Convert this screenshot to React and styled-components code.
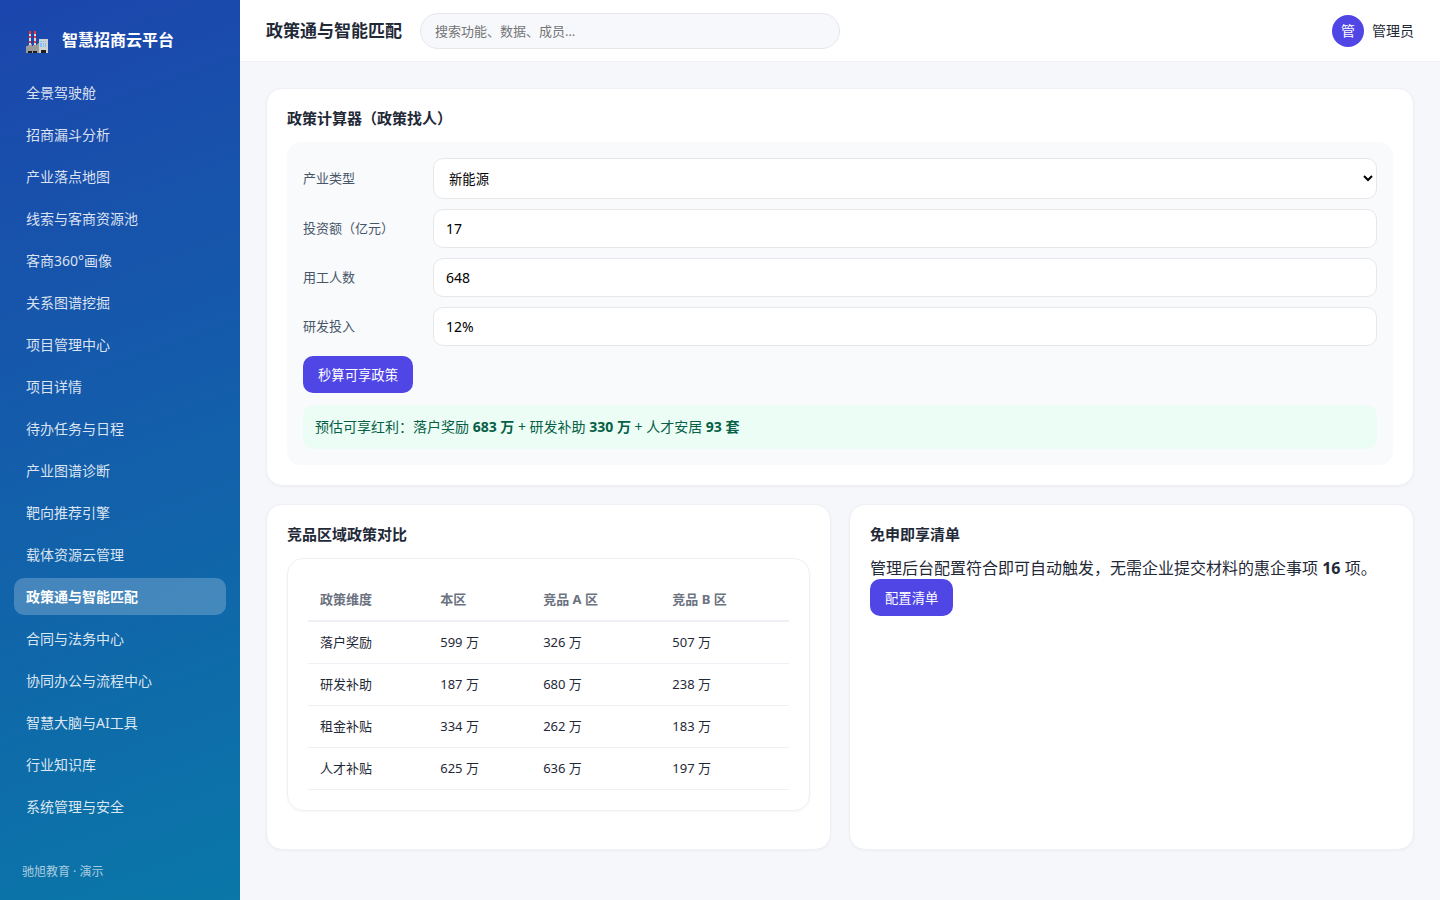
import React, { useState } from "react";
import styled, { createGlobalStyle } from "styled-components";

const menu = [
    "全景驾驶舱",
    "招商漏斗分析",
    "产业落点地图",
    "线索与客商资源池",
    "客商360°画像",
    "关系图谱挖掘",
    "项目管理中心",
    "项目详情",
    "待办任务与日程",
    "产业图谱诊断",
    "靶向推荐引擎",
    "载体资源云管理",
    "政策通与智能匹配",
    "合同与法务中心",
    "协同办公与流程中心",
    "智慧大脑与AI工具",
    "行业知识库",
    "系统管理与安全",
];

const regions = ["本区", "竞品 A 区", "竞品 B 区"];

const policies = [
    { name: "落户奖励", values: [599, 326, 507] },
    { name: "研发补助", values: [187, 680, 238] },
    { name: "租金补贴", values: [334, 262, 183] },
    { name: "人才补贴", values: [625, 636, 197] },
];

const FactoryIcon = () => (
    <svg width="22" height="26" viewBox="0 -4 22 26" shapeRendering="crispEdges" aria-hidden="true">
        <path fill="#d9dde0" d="M3 0h2v14h-2zM8 0h2v14h-2z" />
        <path fill="#f0342c" d="M3 0h2v3h-2zM3 5h2v2h-2zM3 10h2v2h-2zM8 0h2v3h-2zM8 5h2v2h-2zM8 10h2v2h-2z" />
        <path fill="#9b9b9b" d="M0 15h2v-1h3v-1h1v2h1v-1h4v-1h1v-1h1v10h-13z" />
        <path fill="#d0d3d6" d="M13 8h9v14h-9z" />
        <path fill="#7fc4f5" d="M14 10h2v1h-2zM17 10h1v1h-1zM19 10h1v1h-1zM14 12h2v4h-2zM17 12h1v4h-1zM19 12h1v4h-1z" />
        <path fill="#1f1f1f" d="M2 20h4v2h-4zM7 20h4v2h-4zM15 19h5v3h-5z" />
    </svg>
);

const App = () => {
    const [active, setActive] = useState("政策通与智能匹配");

    return (
        <>
            <GlobalStyle />
            <Layout>
                <Sidebar>
                    <Brand>
                        <FactoryIcon />
                        智慧招商云平台
                    </Brand>
                    <Menu>
                        {menu.map((item) => (
                            <MenuLink
                                key={item}
                                href="#"
                                $active={item === active}
                                onClick={() => setActive(item)}
                            >
                                {item}
                            </MenuLink>
                        ))}
                    </Menu>
                    <SideFooter>驰旭教育 · 演示</SideFooter>
                </Sidebar>

                <Main>
                    <Topbar>
                        <PageTitle>政策通与智能匹配</PageTitle>
                        <Search type="search" aria-label="搜索" placeholder="搜索功能、数据、成员…" />
                        <User>
                            <Avatar>管</Avatar>
                            管理员
                        </User>
                    </Topbar>

                    <Content>
                        <Card>
                            <CardTitle>政策计算器（政策找人）</CardTitle>
                            <Calculator onSubmit={(e) => e.preventDefault()}>
                                <Field>
                                    <label htmlFor="industry">产业类型</label>
                                    <Select id="industry" defaultValue="新能源">
                                        <option>新能源</option>
                                    </Select>
                                </Field>
                                <Field>
                                    <label htmlFor="amount">投资额（亿元）</label>
                                    <Input id="amount" defaultValue="17" />
                                </Field>
                                <Field>
                                    <label htmlFor="staff">用工人数</label>
                                    <Input id="staff" defaultValue="648" />
                                </Field>
                                <Field>
                                    <label htmlFor="research">研发投入</label>
                                    <Input id="research" defaultValue="12%" />
                                </Field>
                                <Button type="submit">秒算可享政策</Button>
                                <Result>
                                    预估可享红利：落户奖励 <b>683 万</b> + 研发补助 <b>330 万</b> + 人才安居 <b>93 套</b>
                                </Result>
                            </Calculator>
                        </Card>

                        <Columns>
                            <Card>
                                <CardTitle>竞品区域政策对比</CardTitle>
                                <TableCard>
                                    <Table>
                                        <thead>
                                            <tr>
                                                <th>政策维度</th>
                                                {regions.map((region) => (
                                                    <th key={region}>{region}</th>
                                                ))}
                                            </tr>
                                        </thead>
                                        <tbody>
                                            {policies.map((policy) => (
                                                <tr key={policy.name}>
                                                    <td>{policy.name}</td>
                                                    {policy.values.map((value, i) => (
                                                        <td key={regions[i]}>{value} 万</td>
                                                    ))}
                                                </tr>
                                            ))}
                                        </tbody>
                                    </Table>
                                </TableCard>
                            </Card>
                            <Card>
                                <CardTitle>免申即享清单</CardTitle>
                                <Text>
                                    管理后台配置符合即可自动触发，无需企业提交材料的惠企事项 <b>16</b> 项。
                                </Text>
                                <Button type="button">配置清单</Button>
                            </Card>
                        </Columns>
                    </Content>
                </Main>
            </Layout>
        </>
    );
};

const GlobalStyle = createGlobalStyle`
    * {
        box-sizing: border-box;
    }

    body {
        margin: 0;
        background: #f5f7fb;
        color: #1f2937;
        font-family: "Noto Sans", "Noto Sans CJK SC", sans-serif;
        font-size: 16px;
        line-height: 21px;
    }

    button, input, select {
        font-family: inherit;
    }
`;

const Layout = styled.div`
    display: flex;
    min-height: 100vh;
`;

const Sidebar = styled.aside`
    display: flex;
    flex-direction: column;
    flex: 0 0 240px;
    padding: 18px 14px;
    background: linear-gradient(160deg, #1c46ad, #0a77a8);
    color: #fff;
`;

const Brand = styled.div`
    display: flex;
    align-items: center;
    gap: 14px;
    height: 44px;
    padding: 0 12px;
    margin-bottom: 12px;
    font-weight: 700;
`;

const Menu = styled.nav`
    display: flex;
    flex-direction: column;
    gap: 5px;
`;

const MenuLink = styled.a`
    padding: 8px 12px;
    border-radius: 10px;
    background: ${(props) => (props.$active ? "rgba(255, 255, 255, 0.22)" : "transparent")};
    color: ${(props) => (props.$active ? "#fff" : "rgba(255, 255, 255, 0.85)")};
    font-size: 14px;
    font-weight: ${(props) => (props.$active ? 700 : 400)};
    text-decoration: none;
`;

const SideFooter = styled.div`
    margin-top: auto;
    padding: 0 8px;
    color: rgba(255, 255, 255, 0.65);
    font-size: 12px;
`;

const Main = styled.main`
    flex: 1;
    min-width: 0;
`;

const Topbar = styled.header`
    display: flex;
    align-items: center;
    gap: 18px;
    height: 62px;
    padding: 0 26px;
    background: #fff;
    border-bottom: 1px solid #eef0f5;
`;

const PageTitle = styled.h1`
    margin: 0;
    font-size: 17px;
    font-weight: 700;
`;

const Search = styled.input`
    width: 420px;
    height: 36px;
    padding: 0 14px;
    border: 1px solid #e5e7eb;
    border-radius: 18px;
    background: #f7f8fc;
    font-size: 13px;
    outline: none;
`;

const User = styled.div`
    display: flex;
    align-items: center;
    gap: 8px;
    margin-left: auto;
    font-size: 14px;
`;

const Avatar = styled.span`
    display: grid;
    place-items: center;
    width: 32px;
    height: 32px;
    border-radius: 50%;
    background: #4f46e5;
    color: #fff;
`;

const Content = styled.div`
    display: grid;
    gap: 18px;
    padding: 26px;
`;

const Columns = styled.div`
    display: grid;
    grid-template-columns: 1fr 1fr;
    gap: 18px;
`;

const Card = styled.section`
    padding: 20px;
    border: 1px solid #eef0f5;
    border-radius: 16px;
    background: #fff;
    box-shadow: 0 1px 3px rgba(15, 23, 42, 0.04);
`;

const CardTitle = styled.h2`
    margin: 0 0 14px;
    font-size: 15px;
    font-weight: 700;
    line-height: 19px;
`;

const Calculator = styled.form`
    padding: 16px;
    border-radius: 14px;
    background: #f9fafc;
`;

const Field = styled.div`
    display: grid;
    grid-template-columns: 120px 1fr;
    align-items: center;
    gap: 10px;
    margin-bottom: 10px;

    label {
        color: #475569;
        font-size: 13px;
    }
`;

const Input = styled.input`
    width: 100%;
    height: 39px;
    padding: 0 12px;
    border: 1px solid #e5e7eb;
    border-radius: 10px;
    background: #fff;
    color: #000;
    font-size: 14px;
`;

const Select = styled.select`
    width: 100%;
    height: 41px;
    padding: 0 0 0 11px;
    border: 1px solid #e5e7eb;
    border-radius: 10px;
    background: #fff;
    color: #000;
`;

const Button = styled.button`
    display: block;
    height: 37px;
    padding: 0 15px;
    border: 0;
    border-radius: 10px;
    background: #4f46e5;
    color: #fff;
    cursor: pointer;
`;

const Result = styled.div`
    margin-top: 12px;
    padding: 12px;
    border-radius: 10px;
    background: #ecfdf5;
    color: #065f46;
    font-size: 14px;
    line-height: 20px;
`;

const TableCard = styled.div`
    margin-bottom: 18px;
    padding: 20px;
    border: 1px solid #eef0f5;
    border-radius: 16px;
    box-shadow: 0 1px 3px rgba(15, 23, 42, 0.04);
`;

const Table = styled.table`
    width: 100%;
    border-collapse: collapse;
    font-size: 13px;

    th, td {
        height: 42px;
        padding: 0 12px;
        text-align: left;
        border-bottom: 1px solid #eef0f5;
    }

    th {
        color: #6b7280;
        border-bottom-width: 2px;
    }

    th:first-child {
        width: 25%;
    }
`;

const Text = styled.p`
    margin: 0;
`;

export default App;
